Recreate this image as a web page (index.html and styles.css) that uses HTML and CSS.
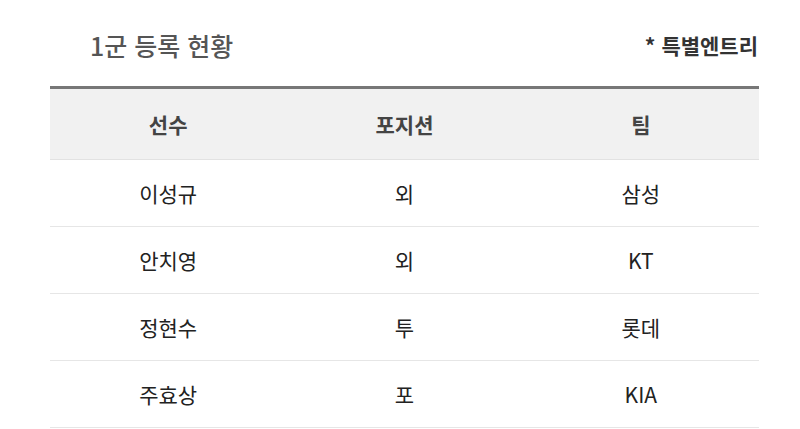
FILE: index.html
```html
<!DOCTYPE html>
<html lang="ko">
<head>
<meta charset="utf-8">
<link rel="stylesheet" href="styles.css">
</head>
<body>
<div class="wrap">
  <div class="head">
    <h2 class="title">1군 등록 현황</h2>
    <span class="note">* 특별엔트리</span>
  </div>
  <table class="roster">
    <thead>
      <tr><th>선수</th><th>포지션</th><th>팀</th></tr>
    </thead>
    <tbody>
      <tr><td>이성규</td><td>외</td><td>삼성</td></tr>
      <tr><td>안치영</td><td>외</td><td>KT</td></tr>
      <tr><td>정현수</td><td>투</td><td>롯데</td></tr>
      <tr><td>주효상</td><td>포</td><td>KIA</td></tr>
    </tbody>
  </table>
</div>
</body>
</html>
```
FILE: styles.css
```css
html, body {
  margin: 0;
  padding: 0;
  background: #fff;
  font-family: "Noto Sans CJK KR", "Noto Sans", sans-serif;
}
.wrap {
  width: 709px;
  margin-left: 50px;
}
.head {
  height: 86px;
  display: flex;
  align-items: center;
  justify-content: space-between;
  padding-top: 4px;
  box-sizing: border-box;
}
.title {
  margin: 0 0 0 40px;
  font-size: 25px;
  font-weight: 500;
  color: #555;
  letter-spacing: 0;
}
.note {
  font-size: 21px;
  font-weight: 700;
  color: #333;
  margin-right: 1px;
}
.roster {
  width: 100%;
  border-collapse: collapse;
  table-layout: fixed;
  border-top: 3px solid #777;
}
.roster th {
  height: 70px;
  background: #f1f1f1;
  font-size: 21px;
  font-weight: 700;
  color: #444;
  border-bottom: 1px solid #e2e2e2;
  padding: 0;
}
.roster td {
  height: 66px;
  text-align: center;
  font-size: 21px;
  color: #222;
  border-bottom: 1px solid #e6e6e6;
  padding: 0;
}
```
